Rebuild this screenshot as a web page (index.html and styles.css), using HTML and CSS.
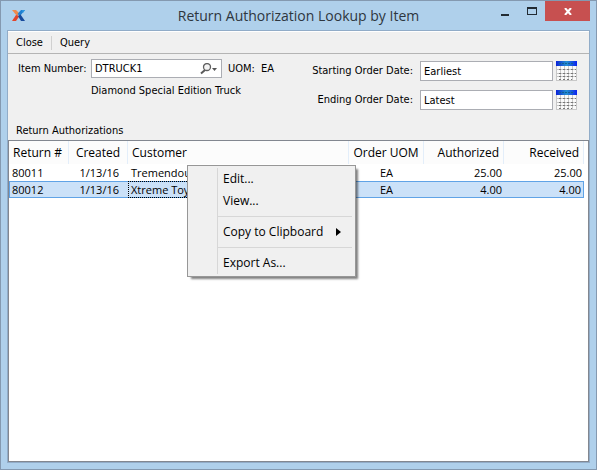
FILE: index.html
```html
<!DOCTYPE html>
<html lang="en">
<head>
<meta charset="utf-8">
<title>Return Authorization Lookup by Item</title>
<link rel="stylesheet" href="styles.css">
</head>
<body>
<div class="window">
  <header class="titlebar">
    <svg class="logo" viewBox="0 0 13 11" aria-hidden="true">
      <path d="M0 0h4l3.500 3.500L5 6z" fill="#f08a4b"/>
      <path d="M13 0H9L5.500 4 8 6z" fill="#1f7fd0"/>
      <path d="M0 11l4-6 3.500 1L4 11z" fill="#e2452b"/>
      <path d="M13 11H9L6 6l2.500-1.500z" fill="#174a9c"/>
      <path d="M10 0h3l-2 3z" fill="#2c98df"/>
    </svg>
    <h1 class="title">Return Authorization Lookup by Item</h1>
    <div class="controls">
      <button class="control" type="button" aria-label="Minimize"><svg width="8" height="10"><path d="M0 8h8v2H0z" fill="#222b33"/></svg></button>
      <button class="control" type="button" aria-label="Maximize"><svg width="10" height="8"><path d="M0 0h10v8H0zM1 2v5h8V2z" fill="#222b33" fill-rule="evenodd"/></svg></button>
      <button class="control control-close" type="button" aria-label="Close window"><svg width="8" height="7"><path d="M1 0l6 7M7 0L1 7" stroke="#fff" stroke-width="2"/></svg></button>
    </div>
  </header>
  <main class="client">
    <nav class="toolbar">
      <button class="tool" type="button">Close</button>
      <button class="tool" type="button">Query</button>
    </nav>
    <form class="filters">
      <div class="item">
        <label class="item-label" for="item">Item Number:</label>
        <div class="lookup">
          <input id="item" class="lookup-input" type="text" value="DTRUCK1">
          <button class="lookup-button" type="button" aria-label="Find item">
            <svg width="17" height="12"><circle cx="7" cy="4" r="3.5" fill="#f4f4f4" stroke="#5f5f5f" stroke-width="1.3"/><path d="M5 7L1 10.500" stroke="#5a5a5a" stroke-width="2"/><path d="M12 5h5l-2.500 3z" fill="#555"/></svg>
          </button>
        </div>
        <span class="uom">UOM:</span>
        <span class="uom">EA</span>
        <p class="description">Diamond Special Edition Truck</p>
      </div>
      <div class="dates">
        <label for="start">Starting Order Date:</label>
        <input id="start" class="date" type="text" value="Earliest">
        <button class="calendar" type="button" aria-label="Pick starting date"><svg width="21" height="20"><use href="#cal"/></svg></button>
        <label for="end">Ending Order Date:</label>
        <input id="end" class="date" type="text" value="Latest">
        <button class="calendar" type="button" aria-label="Pick ending date"><svg width="21" height="20"><use href="#cal"/></svg></button>
      </div>
    </form>
    <h2 class="caption">Return Authorizations</h2>
    <section class="list">
      <table class="grid">
        <colgroup><col class="c-return"><col class="c-created"><col><col class="c-uom"><col class="c-qty"><col class="c-qty"></colgroup>
        <thead>
          <tr><th>Return #</th><th class="center">Created</th><th>Customer</th><th class="center">Order UOM</th><th class="right">Authorized</th><th class="right">Received</th></tr>
        </thead>
        <tbody>
          <tr><td>80011</td><td class="date-cell">1/13/16</td><td>Tremendou</td><td class="center">EA</td><td class="right">25.00</td><td class="right">25.00</td></tr>
          <tr class="selected"><td>80012</td><td class="date-cell">1/13/16</td><td class="focus">Xtreme Toy</td><td class="center">EA</td><td class="right">4.00</td><td class="right">4.00</td></tr>
        </tbody>
      </table>
      <div class="menu" role="menu">
        <button class="entry" type="button" role="menuitem">Edit...</button>
        <button class="entry" type="button" role="menuitem">View...</button>
        <hr class="rule">
        <button class="entry" type="button" role="menuitem">Copy to Clipboard<svg width="5" height="8"><path d="M0 0l5 4-5 4z"/></svg></button>
        <hr class="rule">
        <button class="entry" type="button" role="menuitem">Export As...</button>
      </div>
    </section>
  </main>
</div>
<svg class="defs" width="0" height="0" aria-hidden="true">
  <defs>
    <linearGradient id="sky"><stop offset="0" stop-color="#0a22d8"/><stop offset=".5" stop-color="#238fd0"/><stop offset="1" stop-color="#0a22f0"/></linearGradient>
    <g id="cal">
      <path d="M0 0h21v20H0z" fill="#c8c8c8"/>
      <path d="M0 0h21v5H0z" fill="url(#sky)"/>
      <path d="M3 2.500h15" stroke="#12618f" stroke-dasharray="2 1"/>
      <path d="M1 5h3v3H1zM5 5h3v3H5zM9 5h3v3H9zM13 5h3v3h-3zM17 5h3v3h-3zM1 9h3v3H1zM5 9h3v3H5zM9 9h3v3H9zM13 9h3v3h-3zM17 9h3v3h-3zM1 13h3v2H1zM5 13h3v2H5zM9 13h3v2H9zM13 13h3v2h-3zM17 13h3v2h-3zM1 16h3v3H1zM5 16h3v3H5zM9 16h3v3H9zM13 16h3v3h-3zM17 16h3v3h-3z" fill="#fafafa"/>
      <path d="M3 8.500h17M3 12.500h17M3 15.500h17M3 18.500h13" stroke="#777" stroke-dasharray="2 2"/>
    </g>
  </defs>
</svg>
</body>
</html>
```
FILE: styles.css
```css
* { box-sizing: border-box; }
body { margin: 0; color: #000; font: 11px/14px "DejaVu Sans Condensed", "Noto Sans", sans-serif; }
button { margin: 0; padding: 0; border: 0; background: none; color: inherit; font: inherit; }
input { min-width: 0; padding: 0 3px; border: 1px solid #abadb3; border-radius: 0; background: #fff; color: inherit; font: inherit; }
h1, h2, p { margin: 0; font-weight: 400; }
svg { display: block; }
.defs { position: absolute; }

.window { display: flex; flex-direction: column; height: 100vh; padding: 0 6px 6px; border: 1px solid #8499b0; background: #afd0eb; }
.titlebar { display: grid; grid-template-columns: 130px 1fr 130px; height: 29px; }
.logo { width: 13px; height: 11px; margin: 9px 0 0 5px; }
.title { color: #2e363e; font: 14px/29px "Open Sans", "Noto Sans", sans-serif; text-align: center; white-space: nowrap; }
.controls { display: flex; justify-content: flex-end; height: 20px; }
.control { display: flex; align-items: center; justify-content: center; width: 27px; }
.control-close { width: 45px; background: #c75050; }

.client { display: flex; flex: 1; flex-direction: column; min-height: 0; border: 1px solid #91acc8; background: #f0f0f0; }
.toolbar { display: flex; align-items: center; height: 23px; border-top: 1px solid #fff; border-bottom: 1px solid #b4b4b4; }
.tool { padding: 0 8px; line-height: 14px; }
.tool + .tool { border-left: 1px solid #d0d0d0; }

.filters { display: flex; justify-content: space-between; padding: 5px 12px 0 10px; }
.item { display: grid; grid-template-columns: 68px 131px auto auto; column-gap: 5px; row-gap: 6px; align-content: start; align-items: center; }
.item-label { white-space: nowrap; }
.lookup { position: relative; display: flex; height: 19px; }
.lookup-input { width: 100%; padding-right: 24px; }
.lookup-button { position: absolute; top: 4px; right: 5px; }
.uom { margin-left: 1px; }
.description { grid-column: 2 / -1; }
.dates { display: grid; grid-template-columns: auto 133px 21px; gap: 9px 3px; align-items: center; padding-top: 2px; text-align: right; }
.dates label { padding-right: 4px; }
.date { height: 20px; }

.caption { padding: 14px 8px 2px; font-size: 11px; line-height: 14px; }
.list { position: relative; flex: 1; border: 1px solid #828790; background: #fff; font: 12px/14px "Open Sans", "Noto Sans", sans-serif; }
.grid { width: calc(100% - 4px); border-collapse: separate; border-spacing: 0; table-layout: fixed; }
.c-return { width: 60px; }
.c-created { width: 59px; }
.c-uom { width: 75px; }
.c-qty { width: 80px; }
.grid th { height: 23px; padding: 0 4px; border-right: 1px solid #e3eefa; background: #fcfcfc; font-weight: 400; text-align: left; white-space: nowrap; }
.grid td { height: 17px; padding: 0 3px; border: 0 solid #60a3e6; font-size: 11px; white-space: nowrap; }
.grid .center { text-align: center; }
.grid td.right { padding-right: 2px; }
.grid .right { text-align: right; }
.grid .date-cell { text-align: right; padding-right: 9px; }
.selected td { border-width: 1px 0; background: #cbe1f8; }
.selected td:first-child { padding-left: 2px; border-left-width: 1px; }
.selected td:last-child { border-right-width: 1px; }
.selected .focus { outline: 1px dotted #000; outline-offset: -1px; }

.menu { position: absolute; top: 24px; left: 178px; width: 169px; padding: 2px; border: 1px solid #979797; background: linear-gradient(90deg, transparent 27px, #d7d7d7 27px, #d7d7d7 28px, transparent 28px) 2px 2px / 100% calc(100% - 4px) no-repeat #f0f0f0; box-shadow: 3px 3px 2px -1px #00000080; }
.entry { display: flex; align-items: center; justify-content: space-between; width: 100%; height: 22px; padding: 0 12px 0 33px; text-align: left; white-space: nowrap; }
.rule { height: 1px; margin: 4px 1px 4px 28px; border: 0; background: #d7d7d7; }
```
